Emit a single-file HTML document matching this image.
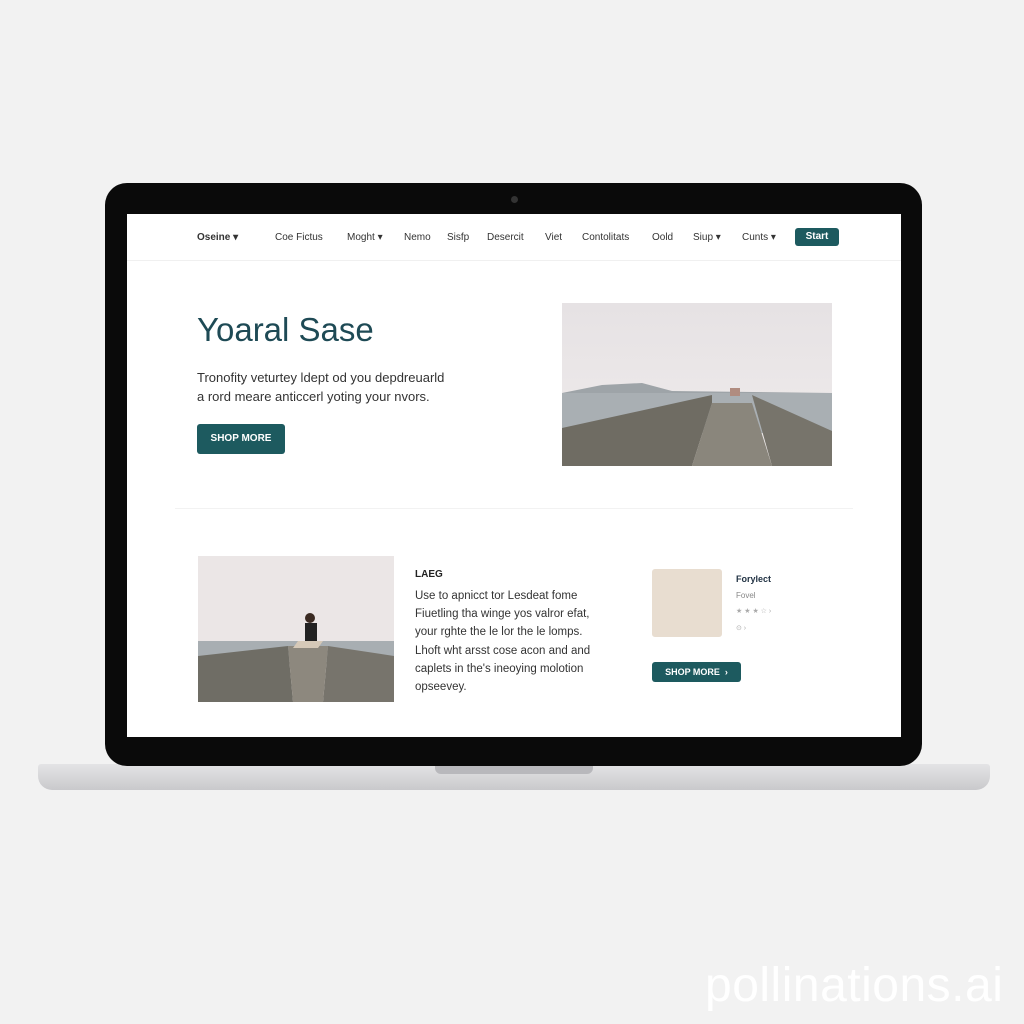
<!DOCTYPE html>
<html><head><style>
body{margin:0;width:1024px;height:1024px;background:#f2f2f2;position:relative;overflow:hidden;font-family:"Liberation Sans",sans-serif}
.a{position:absolute}
.nav span{position:absolute;top:232px;font-size:10px;color:#333}
.btn{background:#1d5a5f;color:#fff;font-weight:bold;border-radius:3px;text-align:center}
.t{font-size:11.5px;color:#333;line-height:18px}
</style></head><body>
<div class="a" style="left:38px;top:764px;width:952px;height:26px;background:linear-gradient(#e4e4e6,#c9c9cc);border-radius:3px 3px 14px 14px"></div>
<div class="a" style="left:435px;top:766px;width:158px;height:8px;background:#b8b8bc;border-radius:0 0 6px 6px"></div>
<div class="a" style="left:105px;top:183px;width:817px;height:583px;background:#0a0a0a;border-radius:22px"></div>
<div class="a" style="left:511px;top:196px;width:7px;height:7px;background:#333;border-radius:50%"></div>
<div class="a" style="left:127px;top:214px;width:774px;height:523px;background:#fff"></div>
<div class="a" style="left:127px;top:260px;width:774px;height:1px;background:#f0f0f0"></div>
<div class="nav">
<span style="left:197px;font-weight:bold">Oseine ▾</span>
<span style="left:275px">Coe Fictus</span>
<span style="left:347px">Moght ▾</span>
<span style="left:404px">Nemo</span>
<span style="left:447px">Sisfp</span>
<span style="left:487px">Desercit</span>
<span style="left:545px">Viet</span>
<span style="left:582px">Contolitats</span>
<span style="left:652px">Oold</span>
<span style="left:693px">Siup ▾</span>
<span style="left:742px">Cunts ▾</span>
</div>
<div class="a btn" style="left:795px;top:228px;width:44px;height:18px;font-size:10px;line-height:18px">Start</div>
<div class="a" style="left:197px;top:311px;font-size:33px;color:#1e4a55">Yoaral Sase</div>
<div class="a" style="left:197px;top:368px;font-size:13px;line-height:19px;color:#333">Tronofity veturtey ldept od you depdreuarld<br>a rord meare anticcerl yoting your nvors.</div>
<div class="a btn" style="left:197px;top:424px;width:88px;height:30px;font-size:10px;line-height:30px">SHOP MORE</div>
<svg class="a" style="left:562px;top:303px" width="270" height="163" viewBox="0 0 270 163">
<defs><linearGradient id="s" x1="0" y1="0" x2="0" y2="1"><stop offset="0" stop-color="#e6e2e4"/><stop offset="1" stop-color="#f0ecec"/></linearGradient></defs>
<rect width="270" height="163" fill="url(#s)"/>
<path d="M0 90 L40 82 L80 80 L110 88 L270 90 L270 125 L0 125Z" fill="#9ea4a8"/>
<rect y="90" width="270" height="40" fill="#a9afb3"/>
<path d="M0 125 L150 92 L150 100 L130 163 L0 163Z" fill="#6f6c63"/>
<path d="M190 92 L270 128 L270 163 L210 163Z" fill="#77746b"/>
<path d="M150 100 L190 100 L210 163 L130 163Z" fill="#8a867c"/>
<rect x="168" y="85" width="10" height="8" fill="#b08c80"/>
</svg>
<div class="a" style="left:175px;top:508px;width:678px;height:1px;background:#f2f2f2"></div>
<svg class="a" style="left:198px;top:556px" width="196" height="146" viewBox="0 0 196 146">
<rect width="196" height="146" fill="#ebe6e6"/>
<rect y="85" width="196" height="20" fill="#a8aeb2"/>
<path d="M0 100 L90 90 L95 146 L0 146Z" fill="#6f6d65"/>
<path d="M130 90 L196 100 L196 146 L125 146Z" fill="#77746c"/>
<path d="M90 90 L130 90 L125 146 L95 146Z" fill="#8d887e"/>
<circle cx="112" cy="62" r="5" fill="#3a2a22"/>
<rect x="107" y="67" width="12" height="18" fill="#222"/>
<path d="M100 85 L125 85 L120 92 L95 92Z" fill="#d6c9b8"/>
</svg>
<div class="a" style="left:415px;top:569px;font-size:10px;font-weight:bold;color:#222">LAEG</div>
<div class="a t" style="left:415px;top:587px">Use to apnicct tor Lesdeat fome<br>Fiuetling tha winge yos valror efat,<br>your rghte the le lor the le lomps.</div>
<div class="a t" style="left:415px;top:642px">Lhoft wht arsst cose acon and and<br>caplets in the's ineoying molotion<br>opseevey.</div>
<div class="a" style="left:652px;top:569px;width:70px;height:68px;background:#e8ddd0;border-radius:3px"></div>
<div class="a" style="left:736px;top:574px;font-size:9px;font-weight:bold;color:#234">Forylect</div>
<div class="a" style="left:736px;top:591px;font-size:8px;color:#888">Fovel</div>
<div class="a" style="left:736px;top:607px;font-size:7px;color:#aaa">★ ★ ★ ☆ ›</div>
<div class="a" style="left:736px;top:624px;font-size:7px;color:#aaa">⊙ ›</div>
<div class="a btn" style="left:652px;top:662px;width:89px;height:20px;font-size:9px;line-height:20px">SHOP MORE &nbsp;›</div>
<div class="a" style="left:705px;top:958px;font-size:48px;color:#fff;letter-spacing:0.5px">pollinations.ai</div>
</body></html>
